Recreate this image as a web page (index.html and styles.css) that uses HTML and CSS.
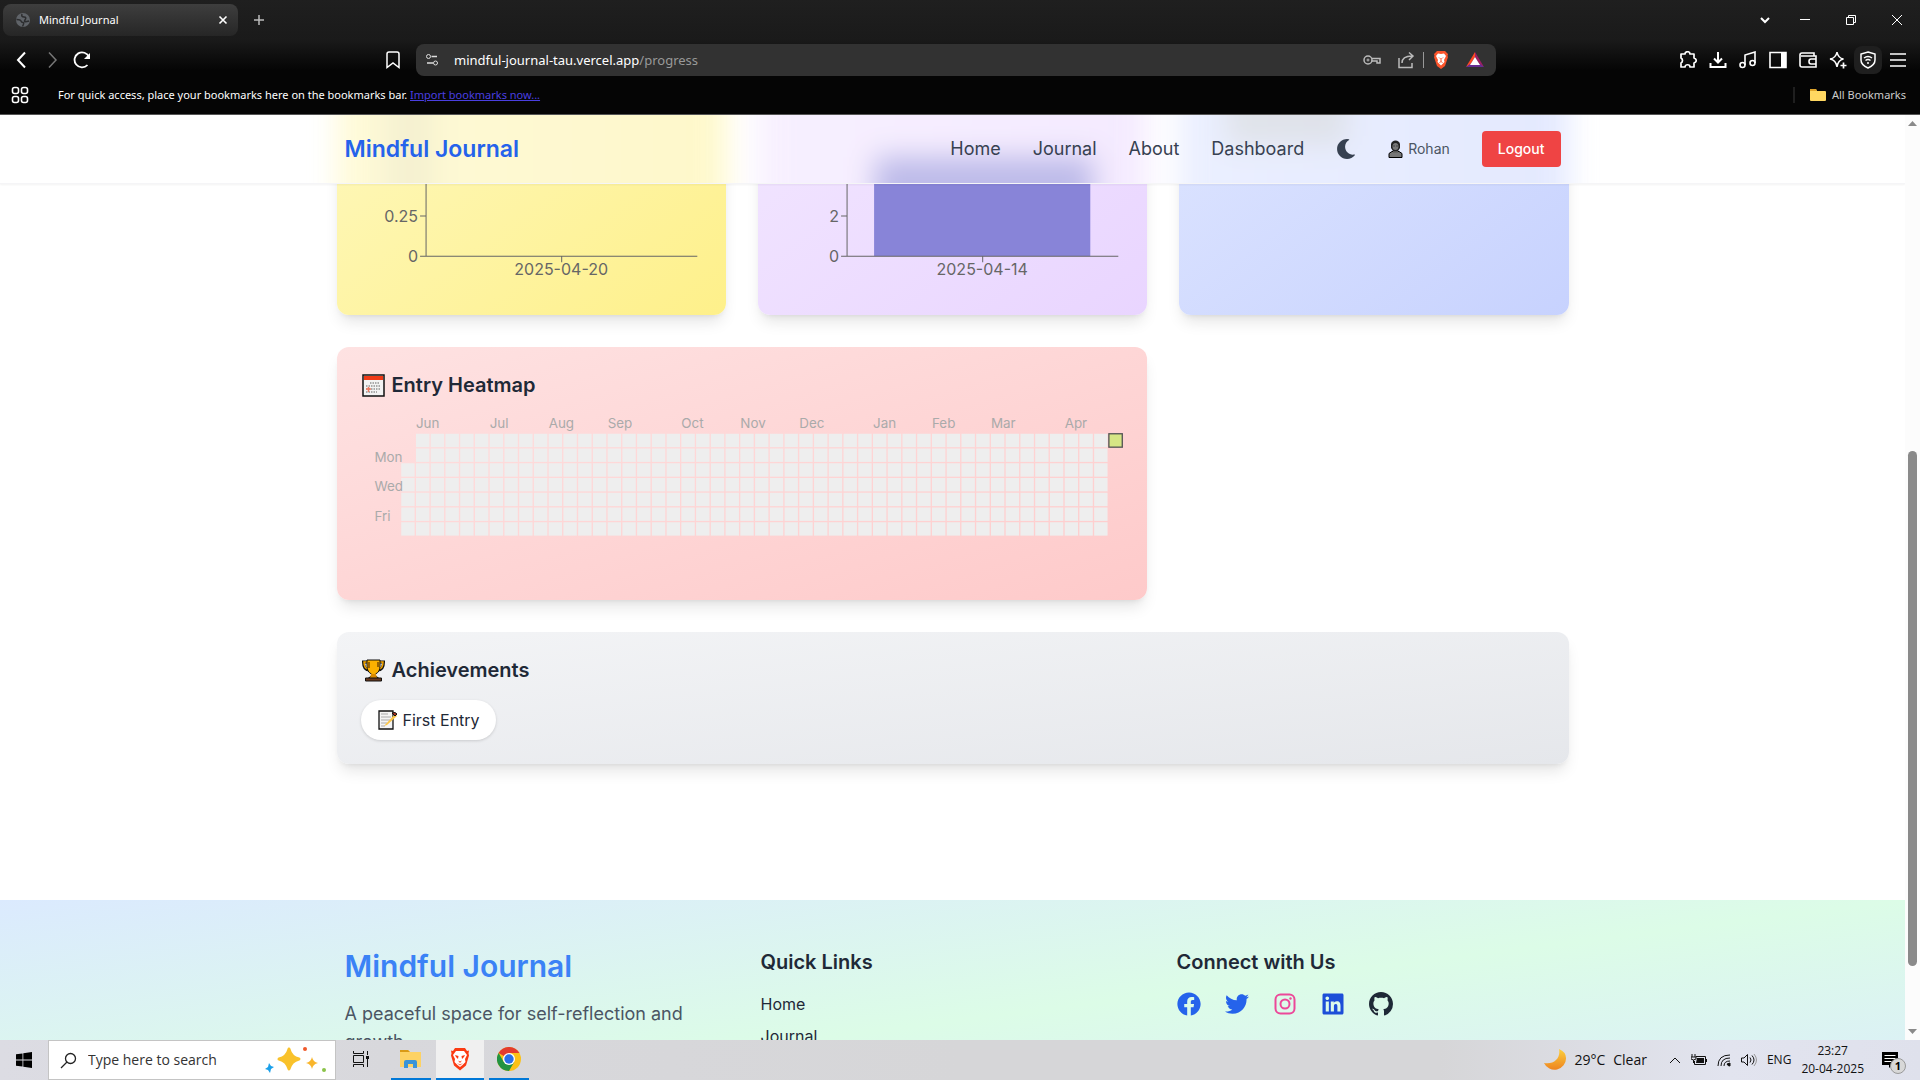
FILE: index.html
```
<!DOCTYPE html>
<html lang="en">
<head>
    <meta charset="UTF-8">
    <meta name="viewport" content="width=device-width, initial-scale=1.0">
    <title>Mindful Journal</title>
    <link rel="stylesheet" href="styles.css">
</head>
<body>
    <!-- Browser window -->
    <div class="browser">
        <div class="tab-strip">
            <div class="tab">
                <svg width="16" height="16" viewBox="0 0 16 16" class="globe"><circle cx="8" cy="8" r="7" fill="#5f6368"/><path d="M1.500 7.500q4 0 4.500 1.500t2 1.500-.5 4M7 2q-1 3 2 3t1 3 4 1" fill="none" stroke="#2c2d2f" stroke-width="1.500"/></svg>
                <span class="tab-title">Mindful Journal</span>
                <button class="icon-btn" aria-label="Close tab"><svg width="10" height="10" viewBox="0 0 10 10"><path d="M1.500 1.500l7 7M8.500 1.500l-7 7" stroke-width="1.600"/></svg></button>
            </div>
            <button class="icon-btn new-tab" aria-label="New tab"><svg width="12" height="12" viewBox="0 0 12 12"><path d="M6 1v10M1 6h10" stroke-width="1.500"/></svg></button>
            <div class="window-controls">
                <button class="icon-btn" aria-label="Search tabs"><svg width="12" height="12" viewBox="0 0 12 12"><path d="M2 4l4 4 4-4" stroke-width="2"/></svg></button>
                <button class="icon-btn" aria-label="Minimize"><svg width="12" height="12" viewBox="0 0 12 12"><path d="M1 5.500h10"/></svg></button>
                <button class="icon-btn" aria-label="Restore"><svg width="12" height="12" viewBox="0 0 12 12"><path d="M1.500 3.500h7v7h-7zM3.500 3.500v-2h7v7h-2"/></svg></button>
                <button class="icon-btn" aria-label="Close"><svg width="12" height="12" viewBox="0 0 12 12"><path d="M1 1l10 10M11 1L1 11"/></svg></button>
            </div>
        </div>

        <div class="toolbar">
            <div class="toolbar-left">
                <button class="icon-btn" aria-label="Back"><svg width="18" height="18" viewBox="0 0 18 18"><path d="M12 1.500L5 9l7 7.500" stroke-width="2"/></svg></button>
                <button class="icon-btn dim" aria-label="Forward"><svg width="18" height="18" viewBox="0 0 18 18"><path d="M6 1.500L13 9l-7 7.500" stroke-width="1.500"/></svg></button>
                <button class="icon-btn" aria-label="Reload"><svg width="18" height="18" viewBox="0 0 18 18"><path d="M14.500 14A7.500 7.500 0 1 1 16 6" stroke-width="1.800"/><path d="M17 2v6h-6z" fill="#fff" stroke="none"/></svg></button>
                <button class="icon-btn push" aria-label="Bookmark this page"><svg width="18" height="18" viewBox="0 0 18 18"><path d="M3 16.500V3q0-2 2-2h8q2 0 2 2v13.500L9 12z" stroke-width="1.500"/></svg></button>
            </div>
            <div class="address-bar">
                <svg class="site-info" width="14" height="14" viewBox="0 0 14 14"><circle cx="3.500" cy="3.500" r="2"/><circle cx="10.500" cy="10" r="2"/><path d="M6.500 3.500H12M2 10h6" stroke-width="1.500"/></svg>
                <div class="url">mindful-journal-tau.vercel.app<span>/progress</span></div>
                <div class="address-icons">
                    <svg width="18" height="18" viewBox="0 0 18 18" class="soft"><circle cx="5" cy="9" r="4" stroke-width="1.500"/><circle cx="5" cy="9" r="1"/><path d="M9 7.500h8v4.500h-3v-2H8.500" stroke-width="1.500"/></svg>
                    <svg width="18" height="18" viewBox="0 0 18 18" class="soft"><path d="M2 7v9.500h13V12M5 12c0-5 4-7 10-7M12 1.500L16 5l-4 4" stroke-width="1.500"/></svg>
                    <i class="bar-divider"></i>
                    <svg width="18" height="20" viewBox="0 0 18 20"><path d="M5 1h8l3 3-.5 2 .5 1-3 9-4 3-4-3-3-9 .5-1L2 4z" fill="#fb542b" stroke="none"/><path d="M9 4l3-.5L14 6l-2 4 .5 2L9 15.500 5.500 12l.5-2-2-4 2-2.500z" fill="#fff" stroke="none"/><path d="M7 7.500l1 1M11 7.500l-1 1M9 8v3M7.500 12.500L9 11.500l1.500 1" stroke="#fb542b"/></svg>
                    <svg width="18" height="18" viewBox="0 0 18 18"><path d="M9 1L0 16l4-2 5-8z" fill="#ff4724" stroke="none"/><path d="M9 1v5l5 8 4 2z" fill="#9e1f63" stroke="none"/><path d="M0 16l4-3h10l4 3z" fill="#662d91" stroke="none"/><path d="M9 6l-5 8h10z" fill="#fff" stroke="none"/></svg>
                </div>
            </div>
            <div class="toolbar-right">
                <button class="icon-btn" aria-label="Extensions"><svg width="18" height="18" viewBox="0 0 18 18"><path d="M2 3h4c0-3 5-3 5 0h4v4c3 1 3 4 0 5v4h-4c0-3-5-3-5 0H2v-4c2-1 2-4 0-5z" stroke-width="1.700" stroke-linejoin="round"/></svg></button>
                <button class="icon-btn" aria-label="Downloads"><svg width="18" height="18" viewBox="0 0 18 18"><path d="M9 1v10M5 7.500L9 11.500l4-4M1.500 12v4h15v-4" stroke-width="2"/></svg></button>
                <button class="icon-btn" aria-label="Media"><svg width="18" height="18" viewBox="0 0 18 18"><path d="M6 14V4l10-3v11" stroke-width="1.600"/><circle cx="3.500" cy="14" r="2.500" stroke-width="1.600"/><circle cx="13.500" cy="12" r="2.500" stroke-width="1.600"/></svg></button>
                <button class="icon-btn" aria-label="Sidebar"><svg width="18" height="18" viewBox="0 0 18 18"><path d="M1 1.500h16v15H1z" stroke-width="1.600"/><path d="M12 1h5v16h-5z" fill="#fff" stroke="none"/></svg></button>
                <button class="icon-btn" aria-label="Wallet"><svg width="18" height="18" viewBox="0 0 18 18"><path d="M15 5V2H3Q1 2 1 4v10q0 2 2 2h14V5H2M17 8h-5q-2 0-2 2.500T12 13h5" stroke-width="1.600"/></svg></button>
                <button class="icon-btn" aria-label="Assistant"><svg width="18" height="18" viewBox="0 0 18 18"><path d="M8 1q1 6 6.500 7Q9 9 8 16 7 9 1 8q6-1 7-7z" stroke-width="1.500"/><path d="M14.500 11.500v6M11.500 14.500h6" stroke-width="1.700"/></svg></button>
                <button class="icon-btn active" aria-label="VPN"><svg width="18" height="18" viewBox="0 0 18 18"><path d="M9 1l7 2v6q0 5-7 8-7-3-7-8V3z" stroke-width="1.500"/><path d="M5 7q4-3 8 0M6.500 9.500q2.500-2 5 0" stroke-width="1.500"/><circle cx="9" cy="12" r="1" fill="#fff" stroke="none"/></svg></button>
                <button class="icon-btn" aria-label="Menu"><svg width="18" height="18" viewBox="0 0 18 18"><path d="M1 3h16M1 9h16M1 15h16" stroke-width="1.500"/></svg></button>
            </div>
        </div>

        <div class="bookmarks-bar">
            <svg width="18" height="18" viewBox="0 0 18 18" stroke-width="1.600"><rect x="1.500" y="1.500" width="6" height="6" rx="2"/><rect x="10.500" y="1.500" width="6" height="6" rx="2"/><rect x="1.500" y="10.500" width="6" height="6" rx="2"/><rect x="10.500" y="10.500" width="6" height="6" rx="2"/></svg>
            <p>For quick access, place your bookmarks here on the bookmarks bar. <a href="#">Import bookmarks now...</a></p>
            <div class="all-bookmarks">
                <svg width="16" height="14" viewBox="0 0 16 14"><path d="M0 2q0-1 1-1h5l1 2h8q1 0 1 1v8q0 1-1 1H1q-1 0-1-1z" fill="#ffd761" stroke="none"/><path d="M0 2q0-1 1-1h5l1 2H0z" fill="#e0a52a" stroke="none"/></svg>
                <span>All Bookmarks</span>
            </div>
        </div>
    </div>

    <div class="viewport">
        <div class="page">
            <header class="site-header">
                <!-- soft colours of the cards behind the frosted header -->
                <div class="frost" aria-hidden="true">
                    <div class="frost-inner">
                        <div class="frost-yellow"><i></i></div>
                        <div class="frost-purple"><i></i></div>
                        <div class="frost-indigo"><i></i></div>
                    </div>
                </div>
                <div class="header-inner">
                    <a href="#" class="logo">Mindful Journal</a>
                    <nav class="site-nav">
                        <a href="#">Home</a>
                        <a href="#">Journal</a>
                        <a href="#">About</a>
                        <a href="#">Dashboard</a>
                        <button class="theme-toggle" aria-label="Toggle dark mode">
                            <svg width="20" height="20" viewBox="0 0 512 512" fill="currentColor"><path d="M283.211 512c78.962 0 151.079-35.925 198.857-94.792 7.068-8.708-.639-21.430-11.562-19.350-124.203 23.654-238.262-71.576-238.262-196.954 0-72.222 38.662-138.635 101.498-174.394 9.686-5.512 7.250-20.197-3.756-22.230A258.156 258.156 0 0 0 283.211 0c-141.309 0-256 114.511-256 256 0 141.309 114.511 256 256 256z"/></svg>
                        </button>
                        <span class="user">
                            <svg width="15" height="18" viewBox="0 0 15 18"><path d="M1 17.500v-4l3-2h7l3 2v4z" fill="#777" stroke="#000"/><path d="M5 9h5v3.500H5z" fill="#555"/><path d="M3 8V4q1-3.500 4.500-3.500T12 4v4l-2 3H5z" fill="#222"/><ellipse cx="7.500" cy="6.500" rx="3" ry="3.500" fill="#777"/><path d="M5.500 6h1M8.500 6h1" stroke="#111"/></svg>
                            Rohan
                        </span>
                        <button class="logout">Logout</button>
                    </nav>
                </div>
            </header>

            <main class="dashboard">
                <section class="card card-yellow">
                    <svg class="chart" viewBox="0 0 341 200">
                        <path d="M65 5v160h271M59 125h6M59 165h6M200.500 165v6"/>
                        <g class="y-labels">
                            <text x="57" y="131">0.25</text>
                            <text x="57" y="171">0</text>
                        </g>
                        <text x="200" y="184" class="x-label">2025-04-20</text>
                    </svg>
                </section>
                <section class="card card-purple">
                    <svg class="chart" viewBox="0 0 341 200">
                        <rect x="92" y="65" width="216" height="100" fill="#8884d8"/>
                        <path d="M65 5v160h271M59 125h6M59 165h6M200.500 165v6"/>
                        <g class="y-labels">
                            <text x="57" y="131">2</text>
                            <text x="57" y="171">0</text>
                        </g>
                        <text x="200" y="184" class="x-label">2025-04-14</text>
                    </svg>
                </section>
                <section class="card card-indigo"></section>

                <section class="card card-red">
                    <h2>
                        <svg width="24" height="23" viewBox="-1 0 24 23"><rect x="1" y="1" width="21" height="21" fill="#f3f3f3" stroke="#111" stroke-width="1.500"/><path d="M2 2h19v4H2z" fill="#f03a17"/><path d="M8 9h10M4 12h14M4 15h14M4 18h11" stroke="#aaa" stroke-width="2" stroke-dasharray="1.500 1"/><path d="M4 15h5M6.500 13v5" stroke="#f07a60" stroke-width="1.500"/></svg>
                        Entry Heatmap
                    </h2>
                    <svg class="heatmap" id="heatmap" viewBox="0 0 569 120"></svg>
                </section>

                <section class="card card-gray">
                    <h2>
                        <svg width="24" height="23" viewBox="-1 0 24 23"><path d="M6 3H1.500q0 8 6 8M17 3h4.500q0 8-6 8" fill="none" stroke="#111" stroke-width="3"/><path d="M6 3H2q0 7 5 7M17 3h4q0 7-5 7" fill="none" stroke="#f7a800" stroke-width="1.500"/><path d="M5 1h13v6q0 6-4.500 8v2l3 2h-10l3-2v-2Q5 13 5 7z" fill="#fbb000" stroke="#111"/><path d="M7 3v6M16 3v5" stroke="#7a4a00" stroke-width="1.500"/><path d="M9 15h5l1 4H8z" fill="#d98a00"/><path d="M3.500 19h16v3h-16z" fill="#6b3a1e" stroke="#111"/></svg>
                        Achievements
                    </h2>
                    <span class="badge">
                        <svg width="20" height="20" viewBox="-1 0 20 20"><path d="M1 1h14v18H1z" fill="#f4f4f4" stroke="#111" stroke-width="1.300"/><path d="M3 4h7M3 7h10M3 10h9M3 13h6M3 16h4" stroke="#aaa"/><path d="M6 16L17 4l2 2L9 15z" fill="#fbc64a"/><path d="M14 3l3 3 2-2-2-1.500z" fill="#b03020" stroke="#111"/></svg>
                        First Entry
                    </span>
                </section>
            </main>

            <footer class="site-footer">
                <div class="footer-inner">
                    <div>
                        <h2 class="footer-logo">Mindful Journal</h2>
                        <p>A peaceful space for self-reflection and growth</p>
                    </div>
                    <div>
                        <h3>Quick Links</h3>
                        <ul>
                            <li><a href="#">Home</a></li>
                            <li><a href="#">Journal</a></li>
                        </ul>
                    </div>
                    <div>
                        <h3>Connect with Us</h3>
                        <div class="social">
                            <a href="#" class="facebook" aria-label="Facebook"><svg width="24" height="24" viewBox="0 0 512 512" fill="currentColor"><path d="M504 256C504 119 393 8 256 8S8 119 8 256c0 123.780 90.690 226.380 209.250 245V327.690h-63V256h63v-54.640c0-62.150 37-96.480 93.670-96.480 27.140 0 55.520 4.840 55.520 4.840v61h-31.280c-30.800 0-40.410 19.120-40.410 38.730V256h68.780l-11 71.690h-57.780V501C413.310 482.380 504 379.780 504 256z"/></svg></a>
                            <a href="#" class="twitter" aria-label="Twitter"><svg width="24" height="24" viewBox="0 0 512 512" fill="currentColor"><path d="M459.370 151.716c.325 4.548.325 9.097.325 13.645 0 138.720-105.583 298.558-298.558 298.558-59.452 0-114.680-17.219-161.137-47.106 8.447.974 16.568 1.299 25.340 1.299 49.055 0 94.213-16.568 130.274-44.832-46.132-.975-84.792-31.188-98.112-72.772 6.498.974 12.995 1.624 19.818 1.624 9.421 0 18.843-1.300 27.614-3.573-48.081-9.747-84.143-51.980-84.143-102.985v-1.299c13.969 7.797 30.214 12.670 47.431 13.319-28.264-18.843-46.781-51.005-46.781-87.391 0-19.492 5.197-37.360 14.294-52.954 51.655 63.675 129.300 105.258 216.365 109.807-1.624-7.797-2.599-15.918-2.599-24.040 0-57.828 46.782-104.934 104.934-104.934 30.213 0 57.502 12.670 76.670 33.137 23.715-4.548 46.456-13.320 66.599-25.340-7.798 24.366-24.366 44.833-46.132 57.827 21.117-2.273 41.584-8.122 60.426-16.243-14.292 20.791-32.161 39.308-52.628 54.253z"/></svg></a>
                            <a href="#" class="instagram" aria-label="Instagram"><svg width="24" height="24" viewBox="0 0 24 24" fill="none" stroke="currentColor" stroke-width="2"><rect x="2.500" y="2.500" width="19" height="19" rx="5"/><circle cx="12" cy="12" r="4.500"/><circle cx="17.500" cy="6.500" r="1.200" fill="currentColor" stroke="none"/></svg></a>
                            <a href="#" class="linkedin" aria-label="LinkedIn"><svg width="24" height="24" viewBox="-32 0 512 512" fill="currentColor"><path d="M416 32H31.900C14.300 32 0 46.500 0 64.300v383.400C0 465.500 14.300 480 31.900 480H416c17.600 0 32-14.500 32-32.300V64.300c0-17.800-14.400-32.300-32-32.300zM135.400 416H69V202.200h66.500V416zm-33.200-243c-21.300 0-38.500-17.300-38.500-38.500S80.900 96 102.200 96c21.200 0 38.500 17.300 38.500 38.500 0 21.300-17.200 38.500-38.500 38.500zm282.100 243h-66.400V312c0-24.800-.5-56.700-34.500-56.700-34.600 0-39.900 27-39.900 54.900V416h-66.400V202.200h63.700v29.200h.9c8.900-16.800 30.600-34.500 62.900-34.500 67.200 0 79.700 44.300 79.700 101.900V416z"/></svg></a>
                            <a href="#" class="github" aria-label="GitHub"><svg width="24" height="24" viewBox="0 0 16 16" fill="currentColor"><path d="M8 0C3.580 0 0 3.580 0 8c0 3.540 2.290 6.530 5.470 7.590.4.070.55-.17.55-.38 0-.19-.01-.82-.01-1.490-2.010.37-2.530-.49-2.690-.94-.09-.23-.48-.94-.82-1.130-.28-.15-.68-.52-.01-.53.63-.01 1.080.58 1.230.82.72 1.210 1.870.87 2.330.66.07-.52.28-.87.51-1.070-1.780-.2-3.640-.89-3.640-3.950 0-.87.31-1.590.82-2.150-.08-.2-.36-1.020.08-2.120 0 0 .67-.21 2.200.82.64-.18 1.320-.27 2-.27s1.360.09 2 .27c1.530-1.040 2.200-.82 2.200-.82.44 1.100.16 1.920.08 2.120.51.56.82 1.270.82 2.150 0 3.070-1.870 3.750-3.650 3.950.29.25.54.73.54 1.480 0 1.070-.01 1.930-.01 2.200 0 .21.15.46.55.38A8.010 8.010 0 0 0 16 8c0-4.420-3.580-8-8-8z"/></svg></a>
                        </div>
                    </div>
                </div>
            </footer>
        </div>

        <div class="scrollbar">
            <svg width="9" height="5" viewBox="0 0 9 5"><path d="M0 5l4.500-5L9 5z"/></svg>
            <div class="scroll-track"><div class="scroll-thumb"></div></div>
            <svg width="9" height="5" viewBox="0 0 9 5"><path d="M0 0l4.500 5L9 0z"/></svg>
        </div>
    </div>

    <!-- Windows taskbar -->
    <div class="taskbar">
        <button class="start" aria-label="Start"><svg width="16" height="16" viewBox="0 0 16 16"><path d="M0 2.300l6.500-.9v6.200H0zM7.300 1.300L16 0v7.600H7.300zM0 8.400h6.500v6.200L0 13.700zM7.300 8.400H16V16l-8.700-1.200z"/></svg></button>
        <label class="search">
            <svg width="17" height="17" viewBox="0 0 17 17" fill="none" stroke="#222" stroke-width="1.300"><circle cx="10.500" cy="6.500" r="5"/><path d="M7 10l-6 6"/></svg>
            <input type="text" aria-label="Search" placeholder="Type here to search">
            <svg width="62" height="28" viewBox="0 0 62 28"><path d="M24 3q2 8 10 10-8 2-10 10-2-8-10-10 8-2 10-10z" fill="#f9c22b" stroke="#f9c22b" stroke-width="3" stroke-linejoin="round"/><path d="M47 11q1 5 6 6-5 1-6 6-1-5-6-6 5-1 6-6z" fill="#f9b52b"/><path d="M4 17l2 3 3 1-3 2-1 4-2-3-3-1 3-2z" fill="#1aa0ea"/><circle cx="40" cy="3" r="2" fill="#f0592b"/><circle cx="59" cy="24" r="2" fill="#8bc34a"/></svg>
        </label>
        <button class="task view" aria-label="Task view"><svg width="16" height="16" viewBox="0 0 16 16" fill="none" stroke="#111"><path d="M.5 0v2.500h10V0M.5 16v-2.500h10V16M.5 4.500h10v7H.5zM14.500 0v4M14.500 8v8"/><path d="M13 5h3v3h-3z" fill="#111" stroke="none"/></svg></button>
        <button class="task open" aria-label="File Explorer"><svg width="22" height="20" viewBox="0 0 22 20"><path d="M0 1h8l2 2h11v15H0z" fill="#fdd264"/><path d="M0 1h8l2 2H0z" fill="#d99a16"/><path d="M4 19v-6q0-2 2-2h9q2 0 2 2v6h-4v-4H8v4z" fill="#3a94d8"/></svg></button>
        <button class="task open current" aria-label="Brave"><svg width="20" height="24" viewBox="0 0 20 24"><path d="M5 1h10l2 3 2-.5-.5 3 .5 2-3 10-6 5-6-5L1 8.500l.5-2-.5-3L3 4z" fill="#fb3a12"/><path d="M6 4h8l3 4-2 4 .5 3-3 3-2.500 2L7.500 18l-3-3 .5-3-2-4z" fill="#fff"/><path d="M5 8l3.500 1-.5 3-2-2zM15 8l-3.500 1 .5 3 2-2zM8 13.500l2 1 2-1-2 2.500zM7 16l3 1.500 3-1.500-3 2.500z" fill="#fb3a12"/></svg></button>
        <button class="task open" aria-label="Chrome"><svg width="24" height="24" viewBox="0 0 24 24"><circle cx="12" cy="12" r="12" fill="#fbc116"/><path d="M12 12L1.600 6A12 12 0 0 1 22.400 6H12z" fill="#e33b2e"/><path d="M1.600 6a12 12 0 0 0 10.400 18l5.200-9L12 12 6.800 15z" fill="#229342"/><circle cx="12" cy="12" r="6" fill="#fff"/><circle cx="12" cy="12" r="4.700" fill="#2a6fe8"/></svg></button>
        <div class="tray">
            <span class="weather">
                <svg width="22" height="22" viewBox="0 0 22 22"><defs><linearGradient id="moon" x1="0" y1="0" x2="0" y2="1"><stop offset="0" stop-color="#fbcf3c"/><stop offset="1" stop-color="#ee8420"/></linearGradient></defs><path d="M15 0c2 9-5 16-15 14a11.500 11.500 0 0 0 22-5q0-6-7-9z" fill="url(#moon)"/></svg>
                <span>29°C</span>
                <span>Clear</span>
            </span>
            <svg width="12" height="8" viewBox="0 0 12 8"><path d="M1 7l5-5 5 5"/></svg>
            <svg width="16" height="12" viewBox="0 0 16 12"><path d="M5 2.500h9.500v8H3.500V7M15.500 5v3M1 0v3M4 0v3M0 3h5v2q-2.500 2-5 0zM2.500 6v3"/><path d="M6 4h7v5H5z" fill="#111" stroke="none"/></svg>
            <svg width="14" height="14" viewBox="0 0 14 14"><path d="M1 13Q1 2 13 2M4 13q0-8 9-8M7 13q0-5 6-5"/><path d="M13 13a3 3 0 0 1-3-2l3-1z" fill="#111"/></svg>
            <svg width="16" height="14" viewBox="0 0 16 14"><path d="M.5 5v4H3l3.500 3.500v-11L3 5zM9 4.500q2 2.500 0 5M11 2.500q4 4.500 0 9"/><path d="M13 1q5 6 0 12" stroke="#999"/></svg>
            <span class="lang">ENG</span>
            <span class="clock">23:27<br>20-04-2025</span>
            <button class="notify" aria-label="Notifications"><svg width="16" height="16" viewBox="0 0 16 16"><path d="M0 0h16v13h-6l-3 3v-3H0z" fill="#000" stroke="none"/><path d="M2.500 3.500h11M2.500 6.500h11M2.500 9.500h7" stroke="#fff"/></svg><b>1</b></button>
        </div>
    </div>

    <script>
        const svgNS = "http://www.w3.org/2000/svg";
        const heatmap = document.getElementById("heatmap");
        const weeks = 49;
        const months = { Jun: 1, Jul: 6, Aug: 10, Sep: 14, Oct: 19, Nov: 23, Dec: 27, Jan: 32, Feb: 36, Mar: 40, Apr: 45 };
        const weekdays = { Mon: 1, Wed: 3, Fri: 5 };

        function addNode(name, attrs, text) {
            const node = document.createElementNS(svgNS, name);
            for (const key in attrs) {
                node.setAttribute(key, attrs[key]);
            }
            if (text) node.textContent = text;
            heatmap.appendChild(node);
        }

        // the first week starts on Tuesday, the last one only has Sunday
        for (let week = 0; week < weeks; week++) {
            for (let day = 0; day < 7; day++) {
                if (week === 0 && day < 2) continue;
                if (week === weeks - 1 && day > 0) continue;
                addNode("rect", {
                    x: 30 + week * 11,
                    y: 14 + day * 11,
                    width: 10,
                    height: 10,
                    class: week === weeks - 1 ? "day filled" : "day"
                });
            }
        }

        for (const month in months) {
            addNode("text", { x: 30 + months[month] * 11, y: 10 }, month);
        }
        for (const day in weekdays) {
            addNode("text", { x: 10, y: 24 + weekdays[day] * 11 }, day);
        }
    </script>
</body>
</html>
```

FILE: styles.css
```
* { box-sizing: border-box; margin: 0; padding: 0; }
body { display: flex; flex-direction: column; height: 100vh; overflow: hidden; font-family: Inter, "Liberation Sans", sans-serif; font-size: 16px; line-height: 24px; color: #1f2937; background: #fff; }
button { border: none; background: none; font-family: inherit; cursor: pointer; }
a { color: inherit; text-decoration: none; }
svg { flex-shrink: 0; }

/* Browser window */
.browser { background: linear-gradient(#1f1f1f, #1a1a1a 40px, #050505 70px); border-bottom: 1px solid #555; color: #fff; font-family: "Noto Sans", "Open Sans", sans-serif; font-size: 12px; line-height: 16px; }
.browser svg { display: block; fill: none; stroke: currentColor; }
.browser .globe { stroke: none; }
.icon-btn { display: flex; align-items: center; justify-content: center; width: 30px; height: 28px; color: #fff; border-radius: 8px; }
.icon-btn.dim { color: #777; }
.icon-btn.active { width: 28px; margin: 0 1px; background: #1f1f1f; }
.tab-strip { display: flex; align-items: center; height: 40px; padding-left: 3px; }
.tab { display: flex; align-items: center; width: 235px; height: 32px; padding-left: 12px; border-radius: 8px; background: linear-gradient(#3e3e3e, #262626); font-size: 11px; }
.tab-title { flex: 1; padding-left: 8px; }
.new-tab { margin-left: 6px; color: #bbb; }
.window-controls { display: flex; margin-left: auto; gap: 16px; padding-right: 8px; }
.window-controls .icon-btn:first-child { margin-right: -6px; }
.toolbar { display: grid; grid-template-columns: 416px 1fr 424px; align-items: center; height: 40px; }
.toolbar-left { display: flex; padding: 0 8px 0 7px; }
.push { margin-left: auto; }
.address-bar { display: flex; align-items: center; height: 32px; padding: 0 12px 0 9px; border-radius: 8px; background: #323232; color: #ddd; }
.url { flex: 1; padding-left: 15px; font-size: 13px; color: #fff; }
.url span { color: #999; }
.address-icons { display: flex; align-items: center; gap: 16px; }
.address-icons .soft { color: #bbb; }
.bar-divider { width: 1px; height: 16px; margin: 0 -8px; background: #999; }
.toolbar-right { display: flex; justify-content: flex-end; padding-right: 7px; }
.bookmarks-bar { display: flex; align-items: center; height: 34px; padding: 0 14px 4px 11px; font-size: 11px; }
.bookmarks-bar p { padding-left: 29px; }
.bookmarks-bar a { color: #4a3fe0; text-decoration: underline; }
.all-bookmarks { display: flex; align-items: center; gap: 6px; margin-left: auto; padding-left: 15px; border-left: 2px solid #1f1f1f; color: #ccc; }

/* Page and its scrollbar */
.viewport { flex: 1; display: flex; min-height: 0; }
.page { flex: 1; position: relative; overflow: hidden; }
.scrollbar { display: flex; flex-direction: column; align-items: center; width: 15px; padding: 6px 0; background: #fcfcfc; fill: #8a8a8a; }
.scroll-track { flex: 1; display: grid; grid-template-rows: 36fr 57fr 7fr; width: 9px; }
.scroll-thumb { grid-row: 2; border-radius: 5px; background: #8a8a8a; }

/* Header */
.site-header { position: absolute; top: 0; left: 0; right: 0; z-index: 10; background: #fff; border-bottom: 1px solid rgba(229, 231, 235, 0.4); box-shadow: 0 1px 2px rgba(0, 0, 0, 0.05); }
.header-inner { position: relative; display: flex; align-items: center; justify-content: space-between; max-width: 1280px; margin: 0 auto; padding: 16px 32px; }
.frost { position: absolute; inset: 0; overflow: hidden; opacity: 0.55; }
.frost-inner { display: grid; grid-template-columns: repeat(3, 1fr); gap: 32px; max-width: 1280px; height: 200px; margin: -60px auto 0; padding: 0 24px; filter: blur(14px); }
.frost-inner div { display: flex; }
.frost-yellow { background: linear-gradient(to right, #fef6b8, #fef3a0); }
.frost-purple { background: linear-gradient(to right, #f1e4ff, #ecdaff); }
.frost-indigo { background: linear-gradient(to right, #dbe3ff, #ced8fe); }
.frost-yellow i { width: 50px; margin-left: 48px; background: rgba(120, 120, 120, 0.12); }
.frost-purple i { width: 56%; margin: 102px 0 0 30%; background: #8884d8; }
.frost-indigo i { width: 120px; height: 90px; margin-left: 48px; background: rgba(160, 160, 130, 0.3); }
.logo { font-size: 23px; font-weight: 600; color: #2563eb; }
.site-nav { display: flex; align-items: center; gap: 32px; font-size: 18px; color: #374151; }
.theme-toggle { display: flex; color: #374151; }
.user { display: flex; align-items: center; gap: 5px; font-size: 14px; color: #4b5563; }
.logout { padding: 8px 16px; border-radius: 4px; background: #ef4444; color: #fff; font-size: 14px; font-weight: 500; line-height: 20px; }

/* Dashboard cards */
.dashboard { display: grid; grid-template-columns: repeat(3, 1fr); gap: 32px; max-width: 1280px; margin: -92px auto 0; padding: 0 24px 136px; }
.card { padding: 24px; border-radius: 12px; box-shadow: 0 10px 15px -3px rgba(0, 0, 0, 0.1), 0 4px 6px -4px rgba(0, 0, 0, 0.1); }
.card h2 { display: flex; align-items: center; gap: 7px; margin-bottom: 16px; font-size: 20px; font-weight: 600; line-height: 28px; }
.card-yellow { background: linear-gradient(to bottom right, #fef9c3, #fef08a); padding-top: 68px; }
.card-purple { background: linear-gradient(to bottom right, #f3e8ff, #e9d5ff); padding-top: 68px; }
.card-indigo { background: linear-gradient(to bottom right, #e0e7ff, #c7d2fe); padding-top: 68px; }
.card-red { grid-column: span 2; background: linear-gradient(to bottom right, #fee2e2, #fecaca); }
.card-gray { grid-column: span 3; background: linear-gradient(to bottom right, #f3f4f6, #e5e7eb); }
.chart { display: block; width: 100%; }
.chart path { fill: none; stroke: #666; }
.chart text { font-size: 16px; fill: #666; }
.y-labels { text-anchor: end; }
.x-label { text-anchor: middle; }
.heatmap { display: block; width: 100%; }
.heatmap text { font-size: 10px; fill: #aaa; }
.day { fill: #eee; }
.day.filled { fill: #d6e685; stroke: #555; }
.badge { display: inline-flex; align-items: center; gap: 6px; padding: 8px 16px; border-radius: 20px; background: #fff; box-shadow: 0 1px 3px rgba(0, 0, 0, 0.15); }

/* Footer */
.site-footer { min-height: 242px; background: linear-gradient(to bottom right, #dbeafe, #dcfce7, #dbeafe); }
.footer-inner { display: grid; grid-template-columns: repeat(3, 1fr); gap: 32px; max-width: 1280px; margin: 0 auto; padding: 48px 32px; }
.footer-logo { margin-bottom: 16px; font-size: 30px; font-weight: 600; line-height: 36px; color: #3b82f6; }
.footer-inner p { font-size: 18px; line-height: 28px; color: #4b5563; }
.footer-inner h3 { margin-bottom: 16px; font-size: 20px; font-weight: 600; line-height: 28px; }
.footer-inner ul { display: grid; gap: 8px; list-style: none; }
.social { display: flex; gap: 24px; }
.social a { display: flex; }
.facebook, .twitter { color: #2563eb; }
.instagram { color: #ec4899; }
.linkedin { color: #1d4ed8; }
.github { color: #1f2937; }

/* Taskbar */
.taskbar { display: flex; height: 40px; background: linear-gradient(to right, #dcdce3, #d8d8dc 20%, #d6d6d8 50%, #d6d6d8 75%, #e2e4ef 90%, #dfe1ec); color: #111; font-family: "Open Sans", "Noto Sans", sans-serif; font-size: 14px; line-height: 18px; }
.start { display: flex; align-items: center; justify-content: center; width: 48px; }
.search { display: flex; align-items: center; gap: 11px; width: 288px; padding: 0 8px 0 11px; border: 1px solid #c4c4c4; background: #fff; }
.search input { flex: 1; min-width: 0; border: none; outline: none; font: inherit; }
.search input::placeholder { color: #333; opacity: 1; }
.task { display: flex; align-items: center; justify-content: center; width: 50px; border-bottom: 2px solid transparent; }
.task.open { width: 40px; margin: 0 5px; border-color: #0078d7; }
.task.current { width: 48px; margin: 0; background: #f0f0f0; }
.tray { display: flex; align-items: center; gap: 10px; margin-left: auto; padding-right: 22px; }
.tray svg { fill: none; stroke: #111; }
.weather { display: flex; align-items: center; gap: 8px; margin-right: 12px; }
.tray .weather svg { stroke: none; }
.lang { font-size: 12px; }
.clock { font-size: 12px; text-align: center; }
.notify { position: relative; display: flex; margin-left: 8px; }
.notify b { position: absolute; top: 6px; left: 8px; width: 16px; height: 16px; border: 1px solid #999; border-radius: 50%; background: #d8d8d8; font-size: 11px; line-height: 14px; }
```
